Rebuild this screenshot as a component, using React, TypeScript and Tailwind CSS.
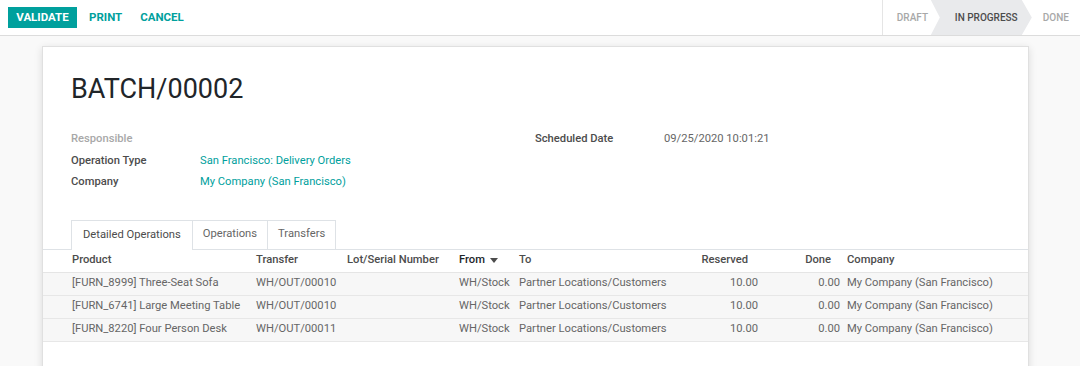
const rows = [
  { product: '[FURN_8999] Three-Seat Sofa', transfer: 'WH/OUT/00010' },
  { product: '[FURN_6741] Large Meeting Table', transfer: 'WH/OUT/00010' },
  { product: '[FURN_8220] Four Person Desk', transfer: 'WH/OUT/00011' },
];

const cols = 'grid grid-cols-[205px_91px_112px_60px_170px_85px_78px_1fr]';

function ControlPanel() {
  return (
    <div className="flex h-[36px] items-stretch justify-between border-b border-[#dcdcdc] bg-white">
      <div className="flex items-center pl-[8px] text-[11.5px] font-bold">
        <button className="h-[21px] w-[69px] bg-[#00a09d] uppercase text-white">Validate</button>
        <button className="ml-[12px] uppercase text-[#00a09d]">Print</button>
        <button className="ml-[18px] uppercase text-[#00a09d]">Cancel</button>
      </div>
      <div className="flex items-stretch border-l border-[#e5e5e5] text-[10px] font-medium uppercase">
        <div className="flex w-[48px] items-center pl-[14px] text-[#a8a8a8]">Draft</div>
        <div className="flex w-[101px] items-center bg-[#e9eaec] pl-[24px] text-[#4c4c4c] [clip-path:polygon(0_0,calc(100%-10px)_0,100%_50%,calc(100%-10px)_100%,0_100%,9px_50%)]">
          In Progress
        </div>
        <div className="flex flex-1 items-center pl-[11px] pr-[11px] text-[#a8a8a8]">Done</div>
      </div>
    </div>
  );
}

function Field({ label, value, muted, link }: { label: string; value?: string; muted?: boolean; link?: boolean }) {
  return (
    <div className="flex h-[21.5px] items-center">
      <div className={`w-[129px] font-medium ${muted ? 'text-[#a8a8a8]' : 'text-[#4c4c4c]'}`}>{label}</div>
      <div className={link ? 'text-[#00a09d]' : 'text-[#666666]'}>{value}</div>
    </div>
  );
}

function App() {
  return (
    <div className="h-[366px] w-[1080px] overflow-hidden bg-[#f9f9f9] font-['Roboto',sans-serif] text-[11.2px] text-[#4c4c4c]">
      <ControlPanel />
      <div className="ml-[42px] mt-[10px] h-[400px] w-[987px] border border-[#e0e0e0] bg-white shadow-[0_2px_8px_rgba(0,0,0,0.12)]">
        <div className="px-[28px] pt-[25px]">
          <h1 className="text-[27px] leading-[34px] font-normal text-[#212529]">BATCH/00002</h1>
          <div className="mt-[23px] grid grid-cols-[464px_1fr]">
            <div>
              <Field label="Responsible" muted />
              <Field label="Operation Type" value="San Francisco: Delivery Orders" link />
              <Field label="Company" value="My Company (San Francisco)" link />
            </div>
            <div>
              <Field label="Scheduled Date" value="09/25/2020 10:01:21" />
            </div>
          </div>
        </div>

        <div className="mt-[26px] flex h-[30px] border-b border-[#dee2e6] pl-[28px]">
          <div className="-mb-px flex items-center border border-b-0 border-[#dee2e6] bg-white px-[11px] text-[#4c4c4c]">Detailed Operations</div>
          <div className="flex items-center border-t border-r border-[#dee2e6] px-[10px] text-[#666666]">Operations</div>
          <div className="flex items-center border-t border-r border-[#dee2e6] px-[10px] text-[#666666]">Transfers</div>
        </div>

        <div className={`${cols} h-[23px] items-center border-b border-[#e5e5e5] font-medium text-[#4c4c4c]`}>
          <div className="pl-[29px]">Product</div>
          <div className="pl-[8px]">Transfer</div>
          <div className="pl-[8px] whitespace-nowrap">Lot/Serial Number</div>
          <div className="flex items-center gap-[5px] pl-[8px] text-[#212529]">
            From
            <svg width="8" height="5" viewBox="0 0 8 5"><path d="M0 0h8L4 5z" fill="#4c4c4c" /></svg>
          </div>
          <div className="pl-[8px]">To</div>
          <div className="pr-[18px] text-right">Reserved</div>
          <div className="pr-[13px] text-right">Done</div>
          <div className="pl-[3px]">Company</div>
        </div>

        {rows.map((r) => (
          <div key={r.product} className={`${cols} h-[23px] items-center border-b border-[#e7e7e7] bg-[#f7f7f7] text-[#666666]`}>
            <div className="pl-[29px] whitespace-nowrap">{r.product}</div>
            <div className="pl-[8px]">{r.transfer}</div>
            <div></div>
            <div className="pl-[8px]">WH/Stock</div>
            <div className="pl-[8px] whitespace-nowrap">Partner Locations/Customers</div>
            <div className="pr-[8px] text-right">10.00</div>
            <div className="pr-[4px] text-right">0.00</div>
            <div className="pl-[3px] whitespace-nowrap">My Company (San Francisco)</div>
          </div>
        ))}
      </div>
    </div>
  );
}

export default App;
